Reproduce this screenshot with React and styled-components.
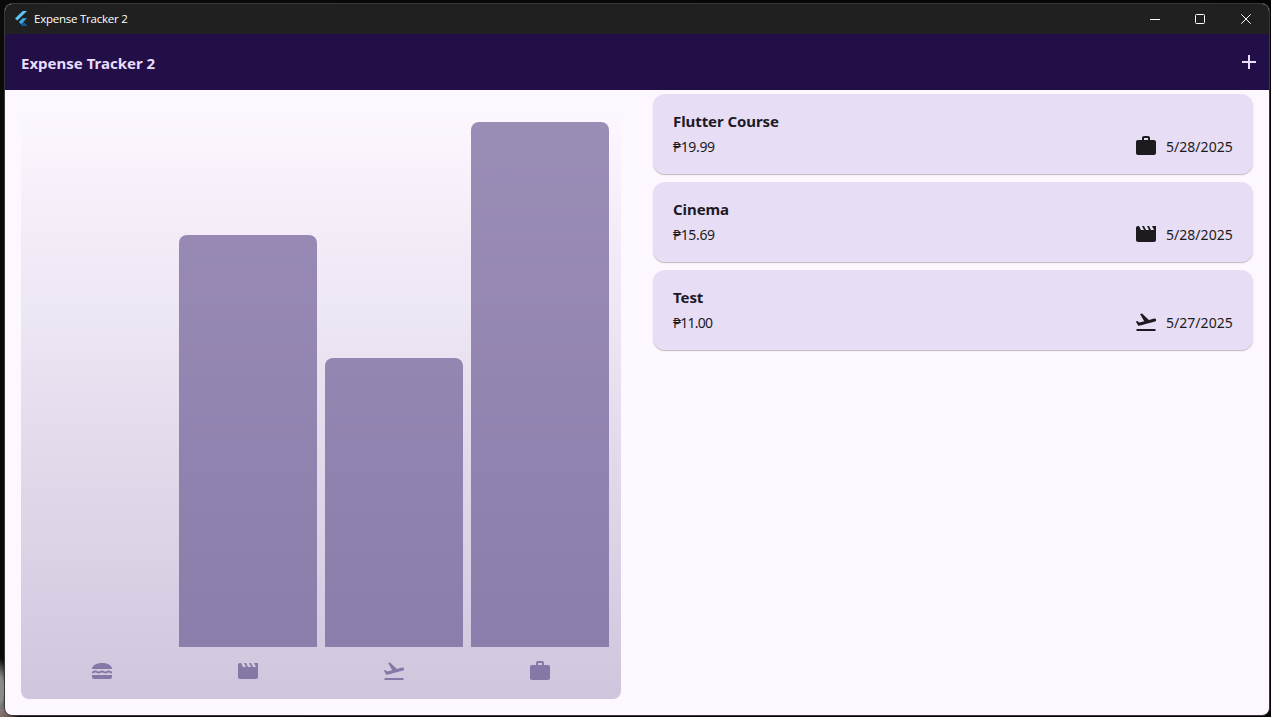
import React from "react";
import styled, { createGlobalStyle } from "styled-components";
import { MdAdd, MdFlightTakeoff, MdLunchDining, MdMovie, MdWork } from "react-icons/md";

const GlobalStyle = createGlobalStyle`
  * { box-sizing: border-box; }
  html, body { margin: 0; height: 100%; overflow: hidden; background: #070807; }
  body { font-family: "Noto Sans", "Open Sans", sans-serif; }
  svg { display: block; }
`;

const Desktop = styled.div`
  height: 717px;
  padding: 3px 1px 1px 4px;
  background:
    radial-gradient(ellipse 9px 32px at 0 690px, #8a8a8a 0 40%, transparent 100%),
    radial-gradient(ellipse 18px 12px at 2px 714px, #79605a 0 30%, transparent 100%),
    linear-gradient(90deg, #0a0a09, #050505);
`;

const Window = styled.div`
  display: flex;
  flex-direction: column;
  height: 713px;
  border: 1px solid #383838;
  border-radius: 8px;
  background: #fdf7ff;
  overflow: hidden;
`;

const TitleBar = styled.header`
  display: flex;
  align-items: center;
  flex: 0 0 30px;
  padding-left: 9px;
  background: #202020;
  color: #fff;
`;

const WindowTitle = styled.span`
  flex: 1;
  margin-left: 6px;
  font-family: "Open Sans", sans-serif;
  font-size: 11.5px;
  line-height: 16px;
  letter-spacing: -0.24px;
`;

const WindowButton = styled.div`
  display: flex;
  align-items: center;
  justify-content: center;
  width: ${(p) => p.$width || 46}px;
  height: 30px;
`;

const AppBar = styled.div`
  display: flex;
  align-items: center;
  justify-content: space-between;
  flex: 0 0 56px;
  padding: 0 8px 0 16px;
  background: #220f47;
  color: #e8ddff;
`;

const AppTitle = styled.h1`
  margin: 1px 0 0;
  font-size: 15px;
  line-height: 24px;
  font-weight: 700;
  letter-spacing: 0;
`;

const Content = styled.main`
  display: flex;
  flex: 1;
`;

const Half = styled.section`
  flex: 1 1 0;
  min-width: 0;
`;

const Chart = styled.div`
  display: flex;
  flex-direction: column;
  height: 593px;
  margin: 16px;
  padding: 16px 8px;
  border-radius: 8px;
  background: linear-gradient(to top, rgba(101, 85, 143, 0.3), rgba(101, 85, 143, 0));
`;

const Bars = styled.div`
  display: flex;
  align-items: flex-end;
  flex: 1;
`;

const BarSlot = styled.div`
  display: flex;
  align-items: flex-end;
  flex: 1;
  height: 100%;
  padding: 0 4px;
`;

const Bar = styled.div`
  width: 100%;
  border-radius: 8px 8px 0 0;
  background: rgba(101, 85, 143, 0.65);
`;

const Legend = styled.div`
  display: flex;
  margin-top: 12px;
`;

const LegendIcon = styled.div`
  display: flex;
  justify-content: center;
  flex: 1;
  color: rgba(101, 85, 143, 0.7);
`;

const List = styled.div`
  display: flex;
  flex-direction: column;
  gap: 8px;
  padding: 4px 16px;
`;

const Card = styled.article`
  height: 80px;
  padding: 17px 20px 15px;
  border-radius: 12px;
  background: #e7def6;
  box-shadow: 0 1px 1px rgba(0, 0, 0, 0.2), 0 1px 2px rgba(0, 0, 0, 0.06);
`;

const ExpenseTitle = styled.h2`
  margin: 0 0 3px;
  color: #1d1a26;
  font-size: 15px;
  line-height: 20px;
  font-weight: 700;
  letter-spacing: -0.08px;
`;

const Details = styled.div`
  display: flex;
  align-items: center;
  justify-content: space-between;
  height: 24px;
  color: #1d1b20;
  font-size: 14px;
  line-height: 20px;
`;

const Amount = styled.span`
  margin-top: 2px;
  letter-spacing: ${(p) => p.$tracking};
`;

const When = styled.div`
  display: flex;
  align-items: center;
  gap: 8px;
`;

const DateText = styled.span`
  width: 67px;
  margin-top: 2px;
  white-space: nowrap;
  letter-spacing: 0.03px;
`;

const FlutterLogo = () => (
  <svg width="14" height="18" viewBox="0 0 14 18">
    <path d="M8.7 1H13L3.3 10.6 1 8.4Z" fill="#5bc8f8" />
    <path d="M8.7 8.2H13L9.1 12.1 13 16H8.7L4.9 12.1Z" fill="#42a9e3" />
    <path d="M7 14.2 9.1 12.1 13 16H8.7Z" fill="#08599c" />
  </svg>
);

const categories = [
  { name: "food", total: 0, Icon: MdLunchDining },
  { name: "leisure", total: 412, Icon: MdMovie },
  { name: "travel", total: 289, Icon: MdFlightTakeoff },
  { name: "work", total: 525, Icon: MdWork },
];

const expenses = [
  { title: "Flutter Course", amount: "₱19.99", date: "5/28/2025", Icon: MdWork, amountTracking: "-0.35px" },
  { title: "Cinema", amount: "₱15.69", date: "5/28/2025", Icon: MdMovie, amountTracking: "-0.35px" },
  { title: "Test", amount: "₱11.00", date: "5/27/2025", Icon: MdFlightTakeoff, amountTracking: "-0.75px" },
];

export default function App() {
  return (
    <Desktop>
      <GlobalStyle />
      <Window>
        <TitleBar>
          <FlutterLogo />
          <WindowTitle>Expense Tracker 2</WindowTitle>
          <WindowButton $width={44}>
            <svg width="10" height="10"><path d="M0 5.5H10" stroke="#fff" /></svg>
          </WindowButton>
          <WindowButton>
            <svg width="10" height="10"><rect x=".5" y=".5" width="9" height="9" rx="1" fill="none" stroke="#fff" /></svg>
          </WindowButton>
          <WindowButton>
            <svg width="10" height="10"><path d="M.3.3 9.7 9.7M9.7.3.3 9.7" stroke="#fff" /></svg>
          </WindowButton>
        </TitleBar>
        <AppBar>
          <AppTitle>Expense Tracker 2</AppTitle>
          <MdAdd size={24} />
        </AppBar>
        <Content>
          <Half>
            <Chart>
              <Bars>
                {categories.map(({ name, total }) => (
                  <BarSlot key={name}>
                    <Bar style={{ height: `${total}px` }} />
                  </BarSlot>
                ))}
              </Bars>
              <Legend>
                {categories.map(({ name, Icon }) => (
                  <LegendIcon key={name}><Icon size={24} /></LegendIcon>
                ))}
              </Legend>
            </Chart>
          </Half>
          <Half>
            <List>
              {expenses.map(({ title, amount, date, Icon, amountTracking }) => (
                <Card key={title}>
                  <ExpenseTitle>{title}</ExpenseTitle>
                  <Details>
                    <Amount $tracking={amountTracking}>{amount}</Amount>
                    <When>
                      <Icon size={24} />
                      <DateText>{date}</DateText>
                    </When>
                  </Details>
                </Card>
              ))}
            </List>
          </Half>
        </Content>
      </Window>
    </Desktop>
  );
}
